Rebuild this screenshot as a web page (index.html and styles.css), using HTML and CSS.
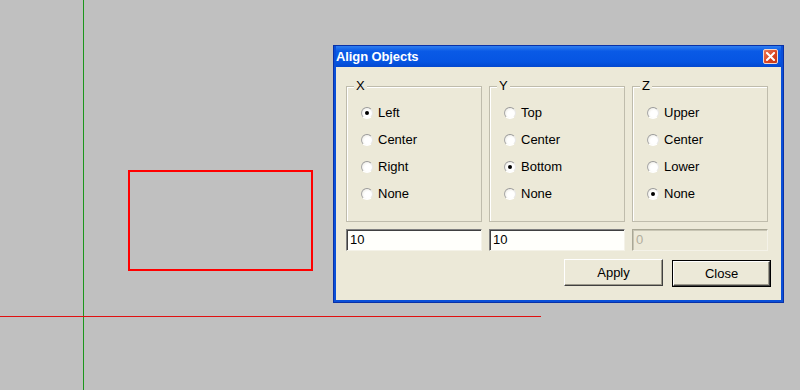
FILE: index.html
```html
<!DOCTYPE html>
<html>
<head>
<meta charset="utf-8">
<link rel="stylesheet" href="styles.css">
</head>
<body>
<div class="canvas">
  <div class="axis-y"></div>
  <div class="axis-x"></div>
  <div class="shape"></div>

  <div class="window">
    <div class="titlebar">
      <span class="title">Align Objects</span>
      <span class="close-x">
        <svg width="9" height="9" viewBox="0 0 9 9"><path d="M1 1L8 8M8 1L1 8" stroke="#fff" stroke-width="2" stroke-linecap="square"/></svg>
      </span>
    </div>
    <div class="client">
      <div class="groups">
        <div class="group">
          <span class="legend">X</span>
          <div class="opt"><span class="radio checked"></span>Left</div>
          <div class="opt"><span class="radio"></span>Center</div>
          <div class="opt"><span class="radio"></span>Right</div>
          <div class="opt"><span class="radio"></span>None</div>
        </div>
        <div class="group">
          <span class="legend">Y</span>
          <div class="opt"><span class="radio"></span>Top</div>
          <div class="opt"><span class="radio"></span>Center</div>
          <div class="opt"><span class="radio checked"></span>Bottom</div>
          <div class="opt"><span class="radio"></span>None</div>
        </div>
        <div class="group">
          <span class="legend">Z</span>
          <div class="opt"><span class="radio"></span>Upper</div>
          <div class="opt"><span class="radio"></span>Center</div>
          <div class="opt"><span class="radio"></span>Lower</div>
          <div class="opt"><span class="radio checked"></span>None</div>
        </div>
      </div>
      <div class="inputs">
        <div class="field">10</div>
        <div class="field">10</div>
        <div class="field disabled">0</div>
      </div>
      <div class="buttons">
        <div class="btn">Apply</div>
        <div class="btn default"><span>Close</span></div>
      </div>
    </div>
  </div>
</div>
</body>
</html>
```

FILE: styles.css
```css
html, body {
  margin: 0;
  padding: 0;
}
body {
  background: #c0c0c0;
  font-family: "Liberation Sans", Arial, sans-serif;
  font-size: 13px;
  color: #000;
}
.canvas {
  position: relative;
  width: 800px;
  height: 390px;
  overflow: hidden;
}
.axis-y {
  position: absolute;
  left: 83px;
  top: 0;
  width: 1px;
  height: 390px;
  background: #1c961c;
}
.axis-x {
  position: absolute;
  left: 0;
  top: 316px;
  width: 541px;
  height: 1px;
  background: #e01010;
}
.shape {
  position: absolute;
  left: 128px;
  top: 170px;
  width: 185px;
  height: 101px;
  box-sizing: border-box;
  border: 2px solid #ff0000;
}
.window {
  position: absolute;
  left: 333px;
  top: 45px;
  width: 451px;
  height: 258px;
  box-sizing: border-box;
  background: #0a4fd8;
  border: 1px solid #0831a8;
  padding: 0 2px 2px 2px;
  display: flex;
  flex-direction: column;
}
.titlebar {
  height: 21px;
  flex: none;
  display: flex;
  align-items: center;
  justify-content: space-between;
  padding: 0 3px 0 0;
  background: linear-gradient(#2f7ef0, #0a5ae6 25%, #0655e2 75%, #0348d0);
}
.title {
  color: #fff;
  font-weight: bold;
  font-size: 13px;
  letter-spacing: -0.1px;
}
.close-x {
  width: 15px;
  height: 15px;
  box-sizing: border-box;
  border: 1px solid #f4d7cc;
  border-radius: 2px;
  background: linear-gradient(135deg, #ec7a56, #d94320 60%, #c2381a);
  display: flex;
  align-items: center;
  justify-content: center;
}
.client {
  flex: 1;
  background: #ece9d8;
  padding: 19px 10px 0 10px;
  display: flex;
  flex-direction: column;
}
.groups {
  display: flex;
  gap: 7px;
}
.group {
  position: relative;
  width: 136px;
  height: 136px;
  box-sizing: border-box;
  border: 1px solid #bfbcac;
  box-shadow: inset 1px 1px #fff;
  padding: 12px 0 0 14px;
}
.legend {
  position: absolute;
  left: 7px;
  top: -9px;
  padding: 0 2px;
  background: #ece9d8;
  line-height: 15px;
}
.opt {
  height: 27px;
  display: flex;
  align-items: center;
  gap: 5px;
}
.radio {
  width: 12px;
  height: 12px;
  box-sizing: border-box;
  border-radius: 50%;
  border: 1px solid;
  border-color: #9a9a9a #e8e8e8 #ffffff #a8a8a8;
  background: radial-gradient(circle at 60% 60%, #ffffff 40%, #e6e4da 100%);
  position: relative;
  flex: none;
}
.radio.checked::after {
  content: "";
  position: absolute;
  left: 3px;
  top: 3px;
  width: 4px;
  height: 4px;
  border-radius: 50%;
  background: #000;
}
.inputs {
  display: flex;
  gap: 7px;
  margin-top: 7px;
}
.field {
  width: 136px;
  height: 22px;
  box-sizing: border-box;
  border: 1px solid;
  border-color: #808080 #f4f2e8 #f4f2e8 #808080;
  box-shadow: inset 1px 1px #404040;
  background: #fffffb;
  padding: 2px 0 0 3px;
  line-height: 16px;
}
.field.disabled {
  background: #ece9d8;
  color: #b2ae9e;
  border-color: #a9a795 #f4f2e8 #f4f2e8 #a9a795;
  box-shadow: inset 1px 1px #c8c5b4;
}
.buttons {
  display: flex;
  justify-content: flex-end;
  gap: 9px;
  margin-top: 7px;
  padding-right: 0;
}
.btn {
  width: 99px;
  height: 27px;
  box-sizing: border-box;
  border: 1px solid;
  border-color: #ffffff #404040 #404040 #ffffff;
  box-shadow: inset -1px -1px #9d9a8c;
  background: #ece9d8;
  display: flex;
  align-items: center;
  justify-content: center;
  margin-top: 1px;
}
.btn.default {
  border: 1px solid #000;
  box-shadow: none;
  padding: 0;
  margin-top: 2px;
}
.btn.default span {
  flex: 1;
  align-self: stretch;
  display: flex;
  align-items: center;
  justify-content: center;
  border: 1px solid;
  border-color: #ffffff #404040 #404040 #ffffff;
  box-shadow: inset -1px -1px #9d9a8c;
}
```
